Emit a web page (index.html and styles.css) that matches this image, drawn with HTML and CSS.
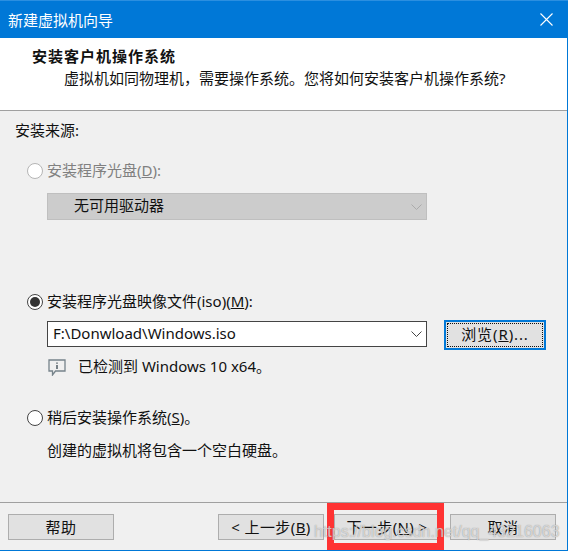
FILE: index.html
```html
<!DOCTYPE html>
<html lang="zh-CN">
<head>
    <meta charset="utf-8">
    <title>新建虚拟机向导</title>
    <link rel="stylesheet" href="styles.css">
</head>
<body>
    <div class="window">
        <div class="titlebar">
            <span>新建虚拟机向导</span>
            <svg class="close-icon" width="13" height="13" viewBox="0 0 13 13"><path d="M0.5 0.5L12.5 12.5M12.5 0.5L0.5 12.5" stroke="#fff" stroke-width="1.1" fill="none"/></svg>
        </div>
        <div class="header">
            <h1>安装客户机操作系统</h1>
            <p>虚拟机如同物理机，需要操作系统。您将如何安装客户机操作系统?</p>
        </div>
        <div class="content">
            <div class="source-title">安装来源:</div>

            <div class="radio-row disabled">
                <span class="radio"></span>
                <span class="radio-label">安装程序光盘(<u>D</u>):</span>
            </div>
            <div class="combo combo-disabled">
                <span>无可用驱动器</span>
                <svg class="chevron" width="11" height="6" viewBox="0 0 11 6"><path d="M0.5 0.5L5.5 5.5L10.5 0.5" stroke="#aaa" fill="none"/></svg>
            </div>

            <div class="radio-row iso-row">
                <span class="radio checked"></span>
                <span class="radio-label">安装程序光盘映像文件(iso)(<u>M</u>):</span>
            </div>
            <div class="iso-input-row">
                <div class="combo combo-iso">
                    <span class="combo-text">F:\Donwload\Windows.iso</span>
                    <svg class="chevron" width="11" height="6" viewBox="0 0 11 6"><path d="M0.5 0.5L5.5 5.5L10.5 0.5" stroke="#444" fill="none"/></svg>
                </div>
                <button class="btn btn-browse"><span class="focus-ring">浏览(<u>R</u>)...</span></button>
            </div>
            <div class="detected">
                <svg width="18" height="17" viewBox="0 0 18 17"><path d="M1 1H17V12H7.5L4.5 16V12H1Z" fill="none" stroke="#76838a" stroke-width="1.3"/><path d="M9 3.5V4.8M9 6V10" stroke="#44525a" stroke-width="1.4" fill="none"/></svg>
                <span class="radio-label">已检测到 Windows 10 x64。</span>
            </div>

            <div class="radio-row later-row">
                <span class="radio"></span>
                <span class="radio-label">稍后安装操作系统(<u>S</u>)。</span>
            </div>
            <div class="later-note">创建的虚拟机将包含一个空白硬盘。</div>
        </div>
        <div class="footer">
            <button class="btn">帮助</button>
            <div class="nav-buttons">
                <button class="btn">&lt; 上一步(<u>B</u>)</button>
                <button class="btn">下一步(<u>N</u>) &gt;</button>
                <button class="btn">取消</button>
            </div>
        </div>
        <div class="highlight"></div>
        <div class="watermark">https://blog.csdn.net/qq_43216063</div>
    </div>
</body>
</html>
```

FILE: styles.css
```css
body {
    margin: 0;
    background-color: #ffffff;
    font-family: "Noto Sans", "Noto Sans CJK SC", sans-serif;
    font-size: 15px;
    color: #111111;
}

.window {
    position: relative;
    width: 567px;
    height: 550px;
    border-right: 1px solid #0078d7;
    border-bottom: 1px solid #0078d7;
    background-color: #f0f0f0;
    display: flex;
    flex-direction: column;
}

.titlebar {
    height: 38px;
    flex-shrink: 0;
    box-sizing: border-box;
    background-color: #0078d7;
    border-top: 1px solid #2b8fe0;
    color: #ffffff;
    display: flex;
    align-items: center;
    justify-content: space-between;
    padding: 0 15px 1px 8px;
    margin-right: -1px;
}

.header {
    height: 73px;
    flex-shrink: 0;
    box-sizing: border-box;
    background-color: #ffffff;
    border-bottom: 1px solid #a0a0a0;
    padding: 7px 0 0 32px;
}

.header h1 { margin: 0; font-size: 15px; line-height: 23px; font-weight: bold; letter-spacing: 1px; }
.header p { margin: -1px 0 0 32px; line-height: 22px; }

.content {
    flex: 1;
    padding: 8px 0 0 15px;
}

.source-title { line-height: 22px; }

.radio-row {
    display: flex;
    align-items: center;
    gap: 4px;
    height: 22px;
    margin-left: 12px;
    line-height: 22px;
}

/* the font sits a pixel lower than the controls beside it */
.radio-label { margin-top: -2px; }

.radio-row.disabled { margin-top: 19px; color: #808080; }
.radio-row.disabled .radio { border-color: #b5b5b5; }

.radio {
    width: 14px;
    height: 14px;
    border: 1px solid #444444;
    border-radius: 50%;
    background-color: #ffffff;
    display: flex;
    align-items: center;
    justify-content: center;
}

.radio.checked::before {
    content: "";
    width: 10px;
    height: 10px;
    border-radius: 50%;
    background-color: #333333;
}

.combo {
    box-sizing: border-box;
    width: 380px;
    height: 27px;
    margin-left: 32px;
    padding: 0 4px 0 5px;
    background-color: #ffffff;
    border: 1px solid #444444;
    display: flex;
    align-items: center;
    justify-content: space-between;
}

.combo span { margin-top: -2px; }

.combo-disabled {
    margin-top: 11px;
    padding-left: 26px;
    background-color: #cccccc;
    border-color: #bfbfbf;
}

.combo-disabled span { margin-top: -4px; }

.combo-iso {
    height: 26px;
    margin-top: 1px;
}

.iso-row { margin-top: 71px; }

.iso-input-row {
    display: flex;
    align-items: flex-start;
    gap: 17px;
    margin-top: 7px;
}

.btn {
    box-sizing: border-box;
    width: 106px;
    height: 26px;
    padding: 0;
    background-color: #e1e1e1;
    border: 1px solid #adadad;
    color: #111111;
    font-family: "Noto Sans", "Noto Sans CJK SC", sans-serif;
    font-size: 15px;
    line-height: 1;
    letter-spacing: 0.4px;
}

.btn-browse {
    width: 102px;
    height: 30px;
    border: 2px solid #0078d7;
    padding: 1px;
    letter-spacing: 0.9px;
}

.focus-ring {
    display: flex;
    align-items: center;
    justify-content: center;
    height: 100%;
    padding-bottom: 2px;
    border: 1px dotted #111111;
    box-sizing: border-box;
}

.detected {
    display: flex;
    align-items: center;
    gap: 12px;
    height: 20px;
    margin: 7px 0 0 33px;
    line-height: 20px;
}

.later-row { margin-top: 30px; }
.later-note { margin: 10px 0 0 32px; line-height: 22px; }

.footer {
    height: 48px;
    flex-shrink: 0;
    box-sizing: border-box;
    border-top: 1px solid #a0a0a0;
    padding: 11px 11px 0 8px;
    display: flex;
    justify-content: space-between;
}

.nav-buttons { display: flex; gap: 10px; }

/* red annotation box from the original screenshot */
.highlight {
    position: absolute;
    left: 327px;
    top: 503px;
    width: 103px;
    height: 33px;
    border: 7px solid #ff3333;
}

.watermark {
    position: absolute;
    left: 314px;
    top: 523px;
    font-family: "Liberation Sans", sans-serif;
    font-size: 16px;
    color: rgba(255, 255, 255, 0.6);
    text-shadow: 0 0 1px rgba(110, 110, 110, 0.8);
    white-space: nowrap;
}
```
